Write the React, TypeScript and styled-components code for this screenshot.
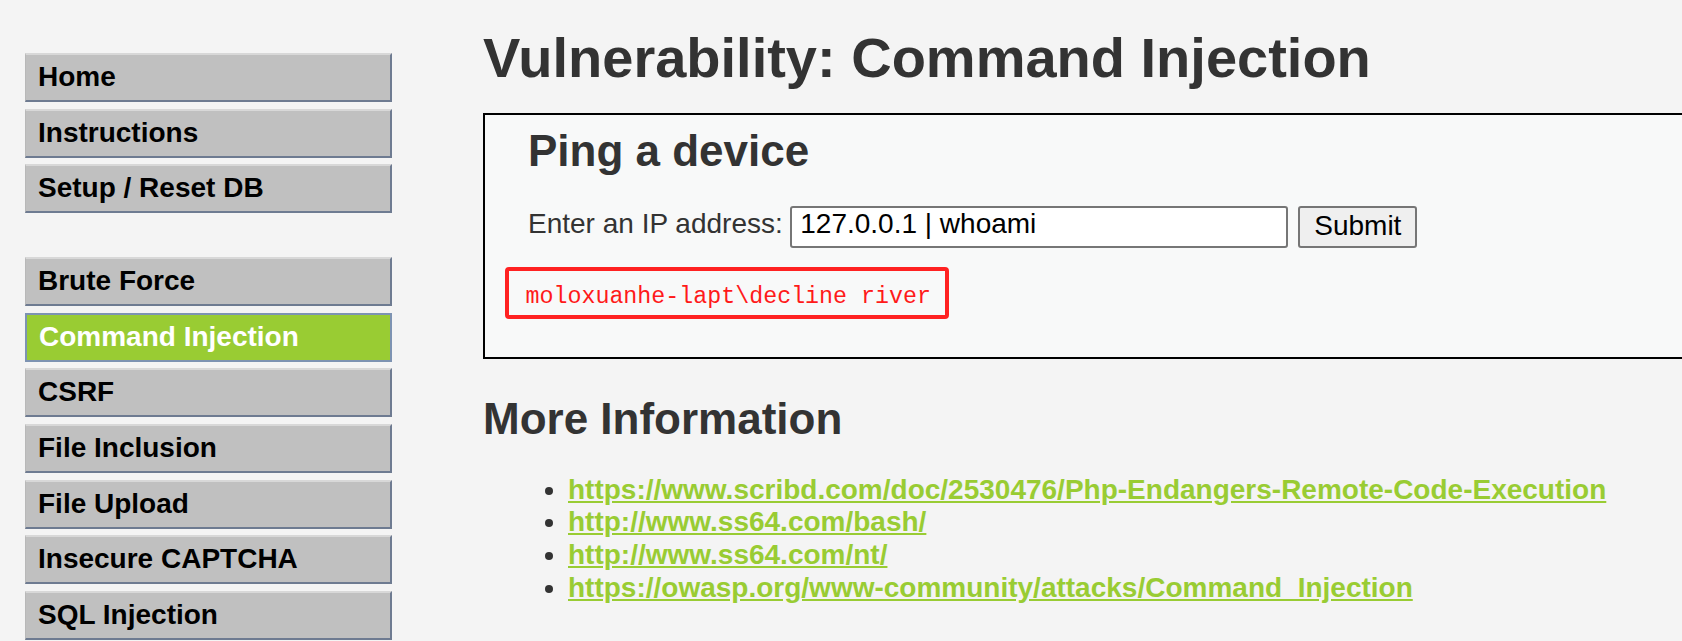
import React from 'react';
import styled, { createGlobalStyle } from 'styled-components';

const GlobalStyle = createGlobalStyle`
  html, body {
    margin: 0;
    padding: 0;
    height: 100%;
    overflow: hidden;
    background: #f4f4f4;
  }
  body {
    font-family: "Liberation Sans", Arial, sans-serif;
    color: #333;
  }
`;

const menuGroups: string[][] = [
  ['Home', 'Instructions', 'Setup / Reset DB'],
  [
    'Brute Force',
    'Command Injection',
    'CSRF',
    'File Inclusion',
    'File Upload',
    'Insecure CAPTCHA',
    'SQL Injection',
  ],
];

const links = [
  'https://www.scribd.com/doc/2530476/Php-Endangers-Remote-Code-Execution',
  'http://www.ss64.com/bash/',
  'http://www.ss64.com/nt/',
  'https://owasp.org/www-community/attacks/Command_Injection',
];

const App: React.FC = () => {
  return (
    <>
      <GlobalStyle />
      <Page>
        {/* Left menu */}
        <Menu>
          {menuGroups.map((group, i) => (
            <MenuGroup key={i}>
              {group.map(item => (
                <MenuItem key={item} $active={item === 'Command Injection'}>
                  {item}
                </MenuItem>
              ))}
            </MenuGroup>
          ))}
        </Menu>

        {/* Main body */}
        <Main>
          <Title>Vulnerability: Command Injection</Title>

          <CodeArea>
            <Indented>
              <SubTitle>Ping a device</SubTitle>
              <Row>
                <Label>Enter an IP address:</Label>
                <IpInput type="text" defaultValue="127.0.0.1 | whoami" />
                <SubmitButton type="button">Submit</SubmitButton>
              </Row>
            </Indented>
            <Output>moloxuanhe-lapt\decline river</Output>
          </CodeArea>

          <MoreTitle>More Information</MoreTitle>
          <LinkList>
            {links.map(href => (
              <li key={href}>
                <ExtLink href={href}>{href}</ExtLink>
              </li>
            ))}
          </LinkList>
        </Main>
      </Page>
    </>
  );
};

export default App;

const Page = styled.div`
  display: flex;
  align-items: flex-start;
  gap: 91px;
  padding: 25px 0 0 25px;
`;

const Menu = styled.nav`
  width: 367px;
  flex-shrink: 0;
  margin-top: 28px;
  display: flex;
  flex-direction: column;
  gap: 44px;
`;

const MenuGroup = styled.div`
  display: flex;
  flex-direction: column;
  gap: 6.6px;
`;

const MenuItem = styled.div<{ $active?: boolean }>`
  box-sizing: border-box;
  height: 49px;
  padding: 5px 10px 7px 12px;
  font-size: 28px;
  line-height: 33px;
  font-weight: bold;
  color: ${p => (p.$active ? '#fff' : '#000')};
  background: ${p => (p.$active ? '#99cc33' : '#c0c0c0')};
  border-style: solid;
  border-width: ${p => (p.$active ? '2px' : '2px 2px 2px 1px')};
  border-color: ${p =>
    p.$active ? '#7d93b2' : '#d8d8d8 #6e7b91 #6e7b91 #b8b8b8'};
  white-space: nowrap;
`;

const Main = styled.main`
  width: 1300px;
  flex-shrink: 0;
`;

const Title = styled.h1`
  margin: 0;
  font-size: 56px;
  font-weight: bold;
  line-height: normal;
  color: #333;
`;

const CodeArea = styled.div`
  margin-top: 22.6px;
  border: 2px solid #000;
  background: #f8f9f9;
  padding: 11px 0 38.7px 20px;
`;

const Indented = styled.div`
  margin-left: 23px;
`;

const SubTitle = styled.h2`
  margin: 0;
  font-size: 44px;
  font-weight: bold;
  line-height: normal;
  color: #333;
`;

const Row = styled.form`
  display: flex;
  align-items: baseline;
  margin-top: 30.4px;
  font-size: 28px;
`;

const Label = styled.span`
  margin-right: 7.5px;
  color: #333;
`;

const IpInput = styled.input`
  box-sizing: border-box;
  width: 498px;
  height: 42px;
  padding: 0 8px 6px 8px;
  border: 2px solid #767676;
  border-radius: 3px;
  background: #fff;
  font-family: "Liberation Sans", Arial, sans-serif;
  font-size: 28px;
  line-height: normal;
  color: #000;
  outline: none;
`;

const SubmitButton = styled.button`
  align-self: flex-start;
  box-sizing: border-box;
  height: 42px;
  margin-left: 10px;
  padding: 2px 14px 3px 14px;
  border: 2px solid #767676;
  border-radius: 3px;
  background: #efefef;
  font-family: "Liberation Sans", Arial, sans-serif;
  font-size: 28px;
  line-height: normal;
  color: #000;
`;

const Output = styled.pre`
  display: inline-block;
  margin: 19px 0 0 0;
  padding: 12.7px 14px 4.9px 16.5px;
  border: 4px solid #ff2222;
  border-radius: 4px;
  font-family: "Liberation Mono", "Courier New", monospace;
  font-size: 23.3px;
  line-height: normal;
  color: #ff1a1a;
`;

const MoreTitle = styled.h2`
  margin: 34.5px 0 0 0;
  font-size: 44px;
  font-weight: bold;
  line-height: normal;
  color: #333;
`;

const LinkList = styled.ul`
  margin: 30px 0 0 0;
  padding-left: 85px;
  font-size: 28px;
  line-height: 32.6px;
  color: #333;
`;

const ExtLink = styled.a`
  color: #99cc33;
  font-weight: bold;
  text-decoration: underline;
`;
